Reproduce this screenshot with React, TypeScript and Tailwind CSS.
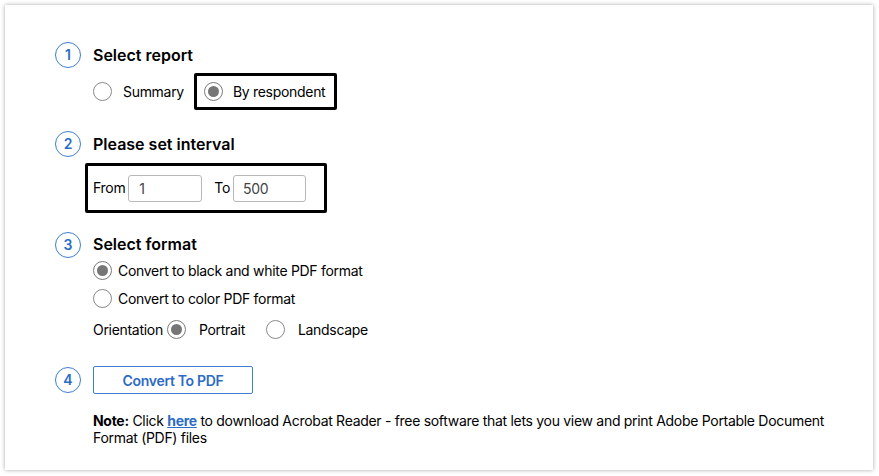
import React from "react";

function Step({ n }: { n: number }) {
  return (
    <div className="w-[26px] h-[26px] shrink-0 rounded-full border-[1.5px] border-[#3d7fd1] flex items-center justify-center text-[#2c6cc4] text-[14px] font-semibold leading-none tracking-normal">
      {n}
    </div>
  );
}

function Radio({ checked }: { checked?: boolean }) {
  return (
    <span
      className={
        "w-[19px] h-[19px] shrink-0 rounded-full border bg-white flex items-center justify-center " +
        (checked ? "border-[#7a7a7a]" : "border-[#8a8a8a]")
      }
    >
      {checked && <span className="w-[11px] h-[11px] rounded-full bg-[#767676]" />}
    </span>
  );
}

export default function App() {
  return (
    <div className="w-[879px] h-[476px] bg-white pt-[5px] pl-[5px] text-black tracking-[-0.3px]" style={{ fontFamily: "Inter, 'Liberation Sans', sans-serif" }}>
      <div className="w-[868px] h-[465px] bg-white shadow-[0_0_4px_rgba(0,0,0,0.35)] pl-[50px] pt-[37px]">
        {/* Step 1 */}
        <div className="flex items-center h-[26px]">
          <Step n={1} />
          <div className="ml-[12px] text-[16px] font-semibold tracking-normal -mt-[1px]">Select report</div>
        </div>
        <div className="flex items-center ml-[38px] mt-[5px] h-[37px] text-[14px]">
          <Radio />
          <span className="ml-[11px]">Summary</span>
          <div className="ml-[10px] h-[37px] border-[3px] border-black rounded-[2px] flex items-center pl-[7px] pr-[9px]">
            <Radio checked />
            <span className="ml-[10px]">By respondent</span>
          </div>
        </div>

        {/* Step 2 */}
        <div className="flex items-center h-[26px] mt-[21px]">
          <Step n={2} />
          <div className="ml-[12px] text-[16px] font-semibold tracking-normal -mt-[1px]">Please set interval</div>
        </div>
        <div className="ml-[30px] mt-[6px] w-[242px] h-[50px] border-[3px] border-black rounded-[2px] flex items-center pl-[5px] text-[14px]">
          <span className="-mt-[2px]">From</span>
          <div className="ml-[3px] w-[74px] h-[27px] border border-[#b8b8b8] rounded-[3px] flex items-center pl-[10px] text-[#444]">1</div>
          <span className="ml-[12px] -mt-[2px]">To</span>
          <div className="ml-[3px] w-[73px] h-[27px] border border-[#b8b8b8] rounded-[3px] flex items-center pl-[9px] text-[#444]">500</div>
        </div>

        {/* Step 3 */}
        <div className="flex items-center h-[26px] mt-[19px]">
          <Step n={3} />
          <div className="ml-[12px] text-[16px] font-semibold tracking-normal -mt-[3px]">Select format</div>
        </div>
        <div className="ml-[38px] text-[14px]">
          <div className="flex items-center h-[19px] mt-[3px]">
            <Radio checked />
            <span className="ml-[6px] -mt-[1px]">Convert to black and white PDF format</span>
          </div>
          <div className="flex items-center h-[19px] mt-[9px]">
            <Radio />
            <span className="ml-[6px] -mt-[1px]">Convert to color PDF format</span>
          </div>
          <div className="flex items-center h-[19px] mt-[12px]">
            <span className="-mt-[1px]">Orientation</span>
            <span className="ml-[4px]"><Radio checked /></span>
            <span className="ml-[13px]">Portrait</span>
            <span className="ml-[21px]"><Radio /></span>
            <span className="ml-[13px]">Landscape</span>
          </div>
        </div>

        {/* Step 4 */}
        <div className="flex items-center h-[28px] mt-[27px]">
          <Step n={4} />
          <button className="ml-[12px] w-[160px] h-[28px] border border-[#3d7fd1] rounded-[2px] text-[#2c6cc4] text-[14px] font-semibold bg-white">
            Convert To PDF
          </button>
        </div>
        <p className="ml-[38px] mt-[18px] w-[750px] text-[14px] leading-[17px]">
          <b className="font-bold">Note:</b> Click <u className="text-[#2c6cc4] font-bold">here</u> to download Acrobat Reader - free software that lets you view and print Adobe Portable Document Format (PDF) files
        </p>
      </div>
    </div>
  );
}
